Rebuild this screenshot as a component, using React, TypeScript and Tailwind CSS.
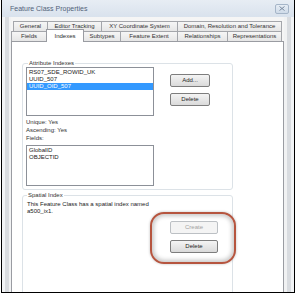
import React from "react";

const font = "font-['Liberation_Sans',Arial,sans-serif]";

type Tab = { label: string; w: string; active?: boolean };

const row1: Tab[] = [
  { label: "General", w: "w-[35px]" },
  { label: "Editor Tracking", w: "w-[55px]" },
  { label: "XY Coordinate System", w: "w-[77px]" },
  { label: "Domain, Resolution and Tolerance", w: "w-[105px]" },
];

const row2: Tab[] = [
  { label: "Fields", w: "w-[36px]" },
  { label: "Indexes", w: "w-[38px]", active: true },
  { label: "Subtypes", w: "w-[38px]" },
  { label: "Feature Extent", w: "w-[58px]" },
  { label: "Relationships", w: "w-[51px]" },
  { label: "Representations", w: "w-[55px]" },
];

function TabButton({ tab, first }: { tab: Tab; first: boolean }) {
  if (tab.active) {
    return (
      <div
        className={`${tab.w} -ml-px -mt-[2px] h-[13px] relative z-10 flex items-center justify-center border border-b-0 border-[#9a9ca2] bg-white text-[#2a2a2a]`}
      >
        {tab.label}
      </div>
    );
  }
  return (
    <div
      className={`${tab.w} ${first ? "" : "-ml-px"} h-[11px] flex items-center justify-center border border-[#a4a6ab] bg-gradient-to-b from-[#f6f6f6] to-[#e6e6e6] text-[#333] whitespace-nowrap`}
    >
      {tab.label}
    </div>
  );
}

function WinButton({ label, w, disabled }: { label: string; w: string; disabled?: boolean }) {
  return (
    <div
      className={
        disabled
          ? `${w} h-[13px] relative z-10 flex items-center justify-center rounded-[2px] border border-[#bcc0c4] bg-[#f4f4f4] text-[#a3a3a3]`
          : `${w} h-[13px] relative z-10 flex items-center justify-center rounded-[2px] border border-[#7d7d7d] bg-gradient-to-b from-[#f4f4f4] to-[#dadada] text-[#1e1e1e]`
      }
    >
      {label}
    </div>
  );
}

export default function App() {
  return (
    <div className={`w-[299px] h-[296px] bg-white overflow-hidden ${font} text-[6px] leading-[7px]`}>
      <div className="ml-px w-[294px] h-[293px] border-x border-b border-black flex flex-col overflow-hidden bg-[#eef1f5]">
        {/* title bar */}
        <div className="h-[17px] shrink-0 flex items-center justify-between pl-[8px] pr-[5px] bg-gradient-to-b from-[#e7edf4] to-[#d9e2ed]">
          <span className="text-[7px] text-[#51627a]">Feature Class Properties</span>
          <div className="w-[14px] h-[10px] flex items-center justify-center rounded-[2px] border border-[#a5b5c8] bg-gradient-to-b from-[#e6edf5] to-[#cfdbe9]">
            <svg width="6" height="5" viewBox="0 0 6 5">
              <path d="M0.5 0.5 L5.5 4.5 M5.5 0.5 L0.5 4.5" stroke="#7a8ba0" strokeWidth="1" />
            </svg>
          </div>
        </div>

        <div className="flex-1 flex min-h-0">
          {/* left frame */}
          <div className="w-[9px] shrink-0 flex">
            <div className="w-[3px] bg-[#f2f4f6]" />
            <div className="w-[4px] bg-[#d9dce0]" />
            <div className="w-[2px] bg-[#f1f2f3]" />
          </div>

          {/* dialog body */}
          <div className="flex-1 min-w-0 flex flex-col bg-[#f5f5f5] pt-[4px]">
            <div className="flex pl-[2px]">
              {row1.map((t, i) => (
                <TabButton key={t.label} tab={t} first={i === 0} />
              ))}
            </div>
            <div className="flex -mt-px items-end">
              {row2.map((t, i) => (
                <TabButton key={t.label} tab={t} first={i === 0} />
              ))}
            </div>

            {/* tab page */}
            <div className="flex-1 -mt-px border border-[#9a9ca2] bg-white pl-[10px] pt-[21px]">
              {/* Attribute Indexes */}
              <div className="relative w-[211px] h-[127px] border border-[#dce2e7] rounded-[3px] pl-[3px] pt-[3px] flex">
                <span className="absolute -top-[4px] left-[5px] bg-white px-[1px] text-[#333]">Attribute Indexes</span>
                <div className="flex flex-col">
                  <div className="w-[128px] h-[49px] border border-[#8c9098] bg-white pt-px text-[#222]">
                    <div className="pl-[2px]">RS07_SDE_ROWID_UK</div>
                    <div className="pl-[2px]">UUID_507</div>
                    <div className="pl-[2px] bg-[#3399ff] text-white">UUID_OID_507</div>
                  </div>
                  <div className="mt-[3px] text-[#333]">Unique: Yes</div>
                  <div className="mt-px text-[#333]">Ascending: Yes</div>
                  <div className="mt-px text-[#333]">Fields:</div>
                  <div className="mt-[3px] w-[128px] h-[41px] border border-[#8c9098] bg-white pt-px pl-[2px] text-[#222]">
                    <div>GlobalID</div>
                    <div>OBJECTID</div>
                  </div>
                </div>
                <div className="ml-[16px] pt-[7px] flex flex-col gap-[6px]">
                  <WinButton label="Add..." w="w-[40px]" />
                  <WinButton label="Delete" w="w-[40px]" />
                </div>
              </div>

              {/* Spatial Index */}
              <div className="relative mt-[5px] w-[211px] h-[120px] border border-[#dce2e7] rounded-[3px] pl-[4px] pt-[5px]">
                <span className="absolute -top-[4px] left-[4px] bg-white px-[1px] text-[#333]">Spatial Index</span>
                <div className="text-[#222]">
                  <div>This Feature Class has a spatial index named</div>
                  <div>a500_ix1.</div>
                </div>
                <div className="mt-[6px] ml-[143px] flex flex-col gap-[6px]">
                  <WinButton label="Create" w="w-[48px]" disabled />
                  <WinButton label="Delete" w="w-[48px]" />
                </div>
                {/* highlight ring drawn over the dialog */}
                <div className="absolute left-[127px] top-[16px] w-[86px] h-[52px] rounded-[14px] border-2 border-[#b6553f] bg-white shadow-[inset_0_0_4px_2px_rgba(0,0,0,0.22),0_0_2px_1px_rgba(0,0,0,0.12)]" />
              </div>
            </div>
          </div>

          {/* right frame */}
          <div className="w-[10px] shrink-0 flex">
            <div className="w-[3px] bg-[#f1f2f3]" />
            <div className="w-[4px] bg-[#d9dce0]" />
            <div className="w-[3px] bg-[#f2f4f6]" />
          </div>
        </div>
      </div>
    </div>
  );
}
